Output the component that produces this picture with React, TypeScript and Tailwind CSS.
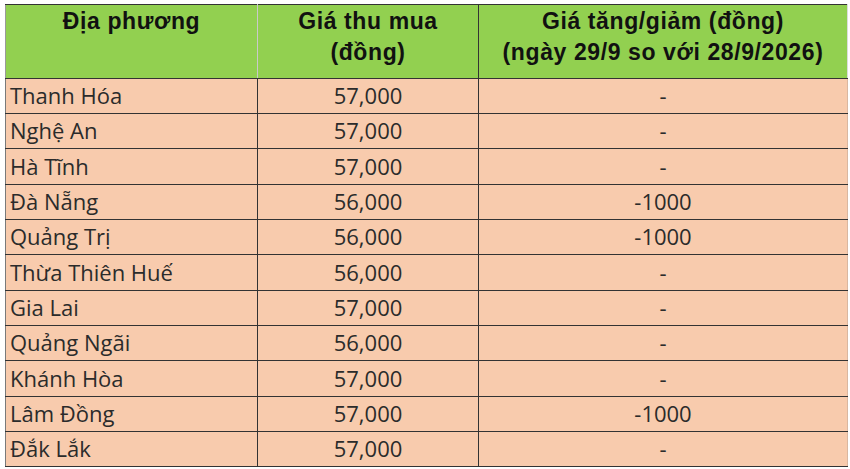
import React from "react";

const rows = [
  { place: "Thanh Hóa", price: "57,000", change: "-" },
  { place: "Nghệ An", price: "57,000", change: "-" },
  { place: "Hà Tĩnh", price: "57,000", change: "-" },
  { place: "Đà Nẵng", price: "56,000", change: "-1000" },
  { place: "Quảng Trị", price: "56,000", change: "-1000" },
  { place: "Thừa Thiên Huế", price: "56,000", change: "-" },
  { place: "Gia Lai", price: "57,000", change: "-" },
  { place: "Quảng Ngãi", price: "56,000", change: "-" },
  { place: "Khánh Hòa", price: "57,000", change: "-" },
  { place: "Lâm Đồng", price: "57,000", change: "-1000" },
  { place: "Đắk Lắk", price: "57,000", change: "-" },
];

const App: React.FC = () => {
  return (
    <div className="w-[850px] h-[469px] bg-white overflow-hidden pt-[4px] pl-[5px]">
      <table className="border-collapse table-fixed w-[842px]">
        <colgroup>
          <col className="w-[252px]" />
          <col className="w-[221px]" />
          <col className="w-[369px]" />
        </colgroup>
        <thead>
          <tr className="h-[74px] bg-[#92d050] font-['Liberation_Sans',Arial,sans-serif] font-bold text-[23px] tracking-[0.6px] leading-[31px] text-[#111]">
            <th className="border border-[#333] border-l-[#9a9a9a] border-r-[#c9c9c9] align-top pt-[1px] text-center">Địa phương</th>
            <th className="border border-[#333] align-top pt-[1px] text-center">
              Giá thu mua
              <br />
              (đồng)
            </th>
            <th className="border border-[#333] border-r-[#dcdcdc] align-top pt-[1px] text-center">
              Giá tăng/giảm (đồng)
              <br />
              (ngày 29/9 so với 28/9/2026)
            </th>
          </tr>
        </thead>
        <tbody className="font-['Open_Sans','Noto_Sans',sans-serif] text-[22px] text-[#2b2b2b]">
          {rows.map((r, idx) => (
            <tr key={idx} className={`bg-[#f8cbad] ${idx % 3 === 2 ? "h-[36px]" : "h-[35px]"}`}>
              <td className="border border-[#333] border-l-[#7a7a7a] pl-[4px] pb-[2px] leading-none">{r.place}</td>
              <td className="border border-[#333] text-center pb-[2px] leading-none">{r.price}</td>
              <td className="border border-[#333] border-r-[#d9b7a0] text-center pb-[2px] leading-none">{r.change}</td>
            </tr>
          ))}
        </tbody>
      </table>
    </div>
  );
};

export default App;
